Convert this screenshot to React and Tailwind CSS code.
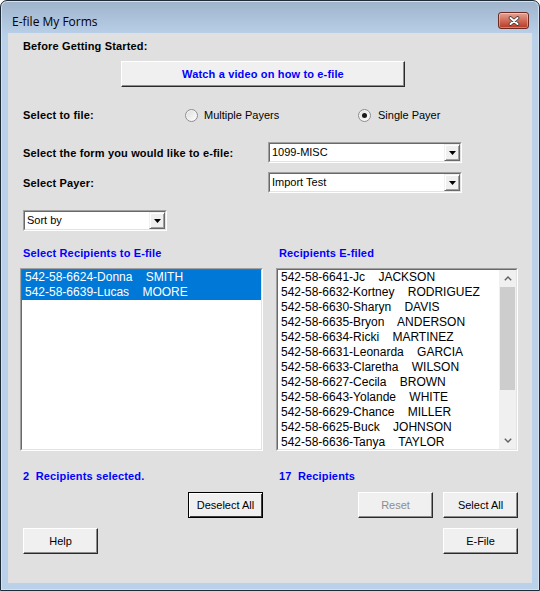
import React from "react";

const leftRows = [
  ["542-58-6624-Donna", "SMITH"],
  ["542-58-6639-Lucas", "MOORE"],
];

const rightRows = [
  ["542-58-6641-Jc", "JACKSON"],
  ["542-58-6632-Kortney", "RODRIGUEZ"],
  ["542-58-6630-Sharyn", "DAVIS"],
  ["542-58-6635-Bryon", "ANDERSON"],
  ["542-58-6634-Ricki", "MARTINEZ"],
  ["542-58-6631-Leonarda", "GARCIA"],
  ["542-58-6633-Claretha", "WILSON"],
  ["542-58-6627-Cecila", "BROWN"],
  ["542-58-6643-Yolande", "WHITE"],
  ["542-58-6629-Chance", "MILLER"],
  ["542-58-6625-Buck", "JOHNSON"],
  ["542-58-6636-Tanya", "TAYLOR"],
];

const Sunken = ({ className = "", innerClassName = "", children }) => (
  <div className={`border border-t-[#a0a0a0] border-l-[#a0a0a0] border-r-white border-b-white ${className}`}>
    <div className={`h-full border border-t-[#696969] border-l-[#696969] border-r-[#e3e3e3] border-b-[#e3e3e3] bg-white ${innerClassName}`}>
      {children}
    </div>
  </div>
);

const Select = ({ value, className = "" }) => (
  <Sunken className={`h-[21px] ${className}`} innerClassName="flex items-stretch">
    <span className="flex-1 pl-[2px] text-[11px] leading-[17px] text-black">{value}</span>
    <span className="flex w-[16px] items-center justify-center border border-t-[#f0f0f0] border-l-[#f0f0f0] border-r-[#696969] border-b-[#696969] bg-[#f0f0f0] shadow-[inset_1px_1px_0_#fff,inset_-1px_-1px_0_#a0a0a0]">
      <svg width="7" height="4" viewBox="0 0 7 4">
        <path d="M0 0h7L3.5 4z" fill="#000" />
      </svg>
    </span>
  </Sunken>
);

const Button = ({ children, className = "", disabled }) => (
  <button
    type="button"
    className={`h-[26px] border border-t-white border-l-white border-r-[#2a2a2a] border-b-[#2a2a2a] bg-[#f0f0f0] text-[11px] shadow-[inset_-1px_-1px_0_#8c8c8c] ${disabled ? "text-[#8d8d8d]" : "text-black"} ${className}`}
  >
    {children}
  </button>
);

const Radio = ({ checked }) => (
  <span className="flex h-[13px] w-[13px] items-center justify-center rounded-full border border-[#8e8f8f] bg-linear-to-br from-[#dcdcdc] to-white shadow-[inset_0_0_0_1px_#f4f4f4]">
    {checked && <span className="h-[5px] w-[5px] rounded-full bg-[#1a1a1a]" />}
  </span>
);

const Row = ({ id, name, selected }) => (
  <div
    className={`h-[15px] whitespace-pre pl-[3px] text-[12px] leading-[15px] ${selected ? "bg-[#0078d7] text-white" : "text-black"}`}
  >
    {`${id}    ${name}`}
  </div>
);

const Chevron = ({ down }) => (
  <svg width="8" height="5" viewBox="0 0 8 5">
    <path
      d={down ? "M0.8 0.8L4 4L7.2 0.8" : "M0.8 4.2L4 1L7.2 4.2"}
      fill="none"
      stroke="#606060"
      strokeWidth="1.4"
    />
  </svg>
);

export default function App() {
  const label = "text-[11px] leading-[14px] font-bold tracking-[0.15px]";
  const blue = "text-[11px] leading-[14px] font-bold tracking-[0.15px] text-[#0000ff]";

  return (
    <div className="h-[591px] w-[540px] overflow-hidden rounded-t-[7px] border border-[#1f2b37] bg-linear-to-b from-[#9fb4cb] to-[#bad1ea] to-[6%] font-['Liberation_Sans',Arial,sans-serif] shadow-[inset_0_0_0_1px_#d3e2f1]">
      {/* title bar */}
      <div className="flex h-[32px] items-start justify-between pl-[11px] pr-[10px]">
        <span className="mt-[13px] font-['Open_Sans',sans-serif] text-[12px] leading-[16px] text-black">
          E-file My Forms
        </span>
        <span className="mt-[11px] flex h-[17px] w-[31px] items-center justify-center rounded-[3px] border border-[#6b2a22] bg-linear-to-b from-[#e3a396] via-[#cf6b57] to-[#b9361f] shadow-[inset_0_0_0_1px_rgba(255,255,255,0.35)]">
          <svg width="12" height="10" viewBox="0 0 12 10">
            <path d="M2.5 2L9.5 8M9.5 2L2.5 8" stroke="#3a3a3a" strokeWidth="3.6" strokeLinecap="round" />
            <path d="M2.5 2L9.5 8M9.5 2L2.5 8" stroke="#fff" strokeWidth="2" strokeLinecap="round" />
          </svg>
        </span>
      </div>

      {/* content */}
      <div className="mx-[7px] flex h-[550px] flex-col bg-[#e0e0e0] text-black">
        <div className={`pl-[15px] pt-[6px] ${label}`}>Before Getting Started:</div>

        <Button className="ml-[113px] mt-[8px] w-[284px] font-bold tracking-[0.15px] text-[#0000ff]">
          <span className="text-[#0000ff]">Watch a video on how to e-file</span>
        </Button>

        <div className="mt-[20px] flex h-[16px] items-center">
          <span className={`w-[177px] pl-[15px] ${label}`}>Select to file:</span>
          <label className="flex w-[173px] items-center gap-[6px] text-[11px]">
            <Radio />
            <span>Multiple Payers</span>
          </label>
          <label className="flex items-center gap-[7px] text-[11px]">
            <Radio checked />
            <span>Single Payer</span>
          </label>
        </div>

        <div className="mt-[19px] flex items-center">
          <span className={`w-[260px] pl-[15px] ${label}`}>Select the form you would like to e-file:</span>
          <Select value="1099-MISC" className="w-[194px]" />
        </div>

        <div className="mt-[9px] flex items-center">
          <span className={`w-[260px] pl-[15px] ${label}`}>Select Payer:</span>
          <Select value="Import Test" className="w-[194px]" />
        </div>

        <Select value="Sort by" className="ml-[15px] mt-[17px] w-[144px]" />

        <div className="mt-[15px] flex">
          <span className={`w-[271px] pl-[15px] ${blue}`}>Select Recipients to E-file</span>
          <span className={blue}>Recipients E-filed</span>
        </div>

        <div className="mt-[8px] flex gap-[13px] pl-[12px]">
          <Sunken className="h-[183px] w-[243px]" innerClassName="overflow-hidden">
            {leftRows.map(([id, name]) => (
              <Row key={id} id={id} name={name} selected />
            ))}
          </Sunken>
          <Sunken className="h-[183px] w-[242px]" innerClassName="flex overflow-hidden">
            <div className="flex-1 overflow-hidden">
              {rightRows.map(([id, name]) => (
                <Row key={id} id={id} name={name} />
              ))}
            </div>
            <div className="flex w-[17px] flex-col bg-[#f0f0f0]">
              <div className="flex h-[17px] items-center justify-center">
                <Chevron />
              </div>
              <div className="mx-[1px] h-[103px] bg-[#cdcdcd]" />
              <div className="flex-1" />
              <div className="flex h-[17px] items-center justify-center">
                <Chevron down />
              </div>
            </div>
          </Sunken>
        </div>

        <div className="mt-[18px] flex">
          <span className={`w-[271px] whitespace-pre pl-[15px] ${blue}`}>{"2  Recipients selected."}</span>
          <span className={`whitespace-pre ${blue}`}>{"17  Recipients"}</span>
        </div>

        <div className="mt-[9px] flex">
          <button
            type="button"
            className="ml-[180px] h-[26px] w-[75px] border border-black bg-[#f0f0f0] text-[11px] text-black shadow-[inset_1px_1px_0_#fff,inset_-1px_-1px_0_#3c3c3c]"
          >
            Deselect All
          </button>
          <Button className="ml-[95px] w-[75px]" disabled>
            Reset
          </Button>
          <Button className="ml-[10px] w-[75px]">Select All</Button>
        </div>

        <div className="mt-[10px] flex">
          <Button className="ml-[15px] w-[75px]">Help</Button>
          <Button className="ml-[345px] w-[75px]">E-File</Button>
        </div>
      </div>
    </div>
  );
}
